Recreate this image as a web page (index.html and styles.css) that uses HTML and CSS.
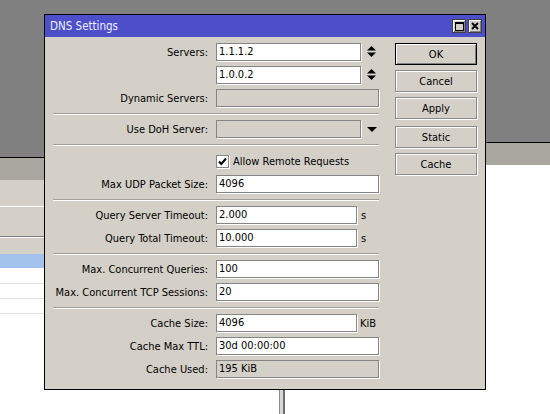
FILE: index.html
```
<!DOCTYPE html>
<html>
<head>
<meta charset="utf-8">
<link rel="stylesheet" href="styles.css">
</head>
<body>
<div class="desktop">
  <div class="win win-left">
    <div class="win-head"></div>
    <div class="band band1"></div>
    <div class="band band2"></div>
    <div class="band band3"></div>
    <div class="list-row selected"></div>
    <div class="list-row"></div>
    <div class="list-row"></div>
    <div class="list-row"></div>
  </div>
  <div class="win win-right">
    <div class="splitter"></div>
    <div class="win-right-main">
      <div class="win-head"></div>
    </div>
  </div>

  <div class="dialog">
    <div class="titlebar">
      <span class="title">DNS Settings</span>
      <div class="tbtns">
        <div class="tbtn"><svg width="9" height="9" viewBox="0 0 9 9"><rect x="0.5" y="0.5" width="8" height="8" fill="none" stroke="#000"/><rect x="0" y="0" width="9" height="2" fill="#000"/></svg></div>
        <div class="tbtn"><svg width="8" height="8" viewBox="0 0 8 8"><path d="M1 1L7 7M7 1L1 7" stroke="#000" stroke-width="1.9" fill="none"/></svg></div>
      </div>
    </div>
    <div class="body">
      <div class="form">
        <div class="row"><span class="lbl">Servers:</span><div class="field w145">1.1.1.2</div><svg class="spin" width="9" height="12" viewBox="0 0 9 12"><polygon points="4.5,0 9,4.5 0,4.5" fill="#000"/><polygon points="0,6.5 9,6.5 4.5,11" fill="#000"/></svg></div>
        <div class="row"><span class="lbl"></span><div class="field w145">1.0.0.2</div><svg class="spin" width="9" height="12" viewBox="0 0 9 12"><polygon points="4.5,0 9,4.5 0,4.5" fill="#000"/><polygon points="0,6.5 9,6.5 4.5,11" fill="#000"/></svg></div>
        <div class="row"><span class="lbl">Dynamic Servers:</span><div class="field disabled"></div></div>
        <div class="sep"></div>
        <div class="row"><span class="lbl">Use DoH Server:</span><div class="field disabled w145"></div><svg class="drop" width="10" height="5" viewBox="0 0 10 5"><polygon points="0,0 10,0 5,5" fill="#000"/></svg></div>
        <div class="sep"></div>
        <div class="row check-row"><span class="lbl"></span><span class="checkbox"><svg width="11" height="11" viewBox="0 0 11 11"><path d="M2 5.5L4.3 8L9 2.5" stroke="#000" stroke-width="2" fill="none"/></svg></span><span class="check-text">Allow Remote Requests</span></div>
        <div class="row"><span class="lbl">Max UDP Packet Size:</span><div class="field">4096</div></div>
        <div class="sep"></div>
        <div class="row"><span class="lbl">Query Server Timeout:</span><div class="field w141">2.000</div><span class="unit">s</span></div>
        <div class="row"><span class="lbl">Query Total Timeout:</span><div class="field w141">10.000</div><span class="unit">s</span></div>
        <div class="sep"></div>
        <div class="row"><span class="lbl">Max. Concurrent Queries:</span><div class="field">100</div></div>
        <div class="row"><span class="lbl">Max. Concurrent TCP Sessions:</span><div class="field">20</div></div>
        <div class="sep"></div>
        <div class="row"><span class="lbl">Cache Size:</span><div class="field w141">4096</div><span class="unit kib">KiB</span></div>
        <div class="row"><span class="lbl">Cache Max TTL:</span><div class="field">30d 00:00:00</div></div>
        <div class="row"><span class="lbl">Cache Used:</span><div class="field disabled">195 KiB</div></div>
      </div>
      <div class="buttons">
        <div class="btn default">OK</div>
        <div class="btn">Cancel</div>
        <div class="btn">Apply</div>
        <div class="btn gap">Static</div>
        <div class="btn">Cache</div>
      </div>
    </div>
  </div>
</div>
</body>
</html>
```
FILE: styles.css
```
* { box-sizing: border-box; }
html, body { margin: 0; padding: 0; }
body {
  font-family: "DejaVu Sans Condensed", "Liberation Sans", sans-serif;
  font-size: 11px;
  color: #000;
}
.desktop {
  position: relative;
  width: 550px;
  height: 414px;
  overflow: hidden;
  background: #808080;
}
.win { position: absolute; background: #fff; }
.win-left {
  left: 0; top: 157px; width: 280px; bottom: 0;
  border-top: 1px solid #000;
}
.win-head { height: 22px; background: #a9a69f; }
.band { background: #d4d0c8; }
.band1 { height: 27px; border-bottom: 1px solid #fff; }
.band2 { height: 30px; border-bottom: 1px solid #7e7e7e; }
.band3 { height: 17px; border-top: 1px solid #fff; }
.list-row { height: 15px; border-bottom: 1px solid #e2e2e2; }
.list-row.selected { background: #a3c2ec; border-bottom: 1px solid #fff; }

.win-right {
  left: 279px; top: 142px; right: 0; bottom: 0;
  display: flex;
}
.splitter {
  width: 6px;
  background: #d6d6d6;
  border-left: 1px solid #8a8a8a;
  border-right: 2px solid #6e6e6e;
}
.win-right-main {
  flex: 1;
  border-top: 1px solid #000;
}

.dialog {
  position: absolute;
  left: 44px; top: 14px;
  width: 442px; height: 376px;
  border: 1px solid #000;
  background: #d4d0c8;
  display: flex;
  flex-direction: column;
}
.titlebar {
  height: 22px;
  background: #4d4fc9;
  display: flex;
  align-items: center;
  padding: 0 3px 0 5px;
}
.title { color: #eeeeff; font-size: 11.5px; }
.tbtns { margin-left: auto; display: flex; gap: 2px; }
.tbtn {
  width: 14px; height: 14px;
  background: #d4d0c8;
  border: 1px solid #404040;
  box-shadow: inset 1px 1px 0 #fff, inset -1px -1px 0 #808080;
  display: flex; align-items: center; justify-content: center;
}
.tbtn svg { display: block; }

.body {
  display: flex;
  padding: 6px 8px 0 8px;
}
.form {
  width: 326px;
  display: flex;
  flex-direction: column;
  gap: 5px;
}
.row {
  height: 18px;
  display: flex;
  align-items: center;
}
.lbl {
  width: 163px;
  flex: none;
  text-align: right;
  padding-right: 8px;
  white-space: nowrap;
}
.field {
  width: 163px;
  height: 18px;
  flex: none;
  background: #fff;
  border: 1px solid #858585;
  box-shadow: 1px 1px 0 #fff;
  padding: 0 2px;
  line-height: 16px;
  white-space: nowrap;
  overflow: hidden;
}
.field.disabled { background: #d4d0c8; }
.field.w145 { width: 145px; }
.field.w141 { width: 141px; }
.spin { margin-left: 6px; display: block; }
.drop { margin-left: 6px; display: block; }
.unit { margin-left: 4px; }
.unit.kib { margin-left: 3px; }
.sep {
  height: 2px;
  margin-top: 1px;
  border-top: 1px solid #a19e98;
  border-bottom: 1px solid #fff;
}
.check-row { margin-top: 1px; }
.checkbox {
  width: 13px; height: 13px;
  flex: none;
  background: #fff;
  border: 1px solid #858585;
  box-shadow: 1px 1px 0 #fff;
  display: flex; align-items: center; justify-content: center;
}
.checkbox svg { display: block; }
.check-text { margin-left: 4px; }

.buttons {
  margin-left: 16px;
  width: 82px;
  display: flex;
  flex-direction: column;
  gap: 5px;
}
.btn {
  height: 22px;
  border: 1px solid #8a8a8a;
  box-shadow: 1px 1px 0 #fff, inset 1px 1px 0 #fff;
  display: flex; align-items: center; justify-content: center;
}
.btn.default {
  border: 1px solid #000;
  box-shadow: inset 1px 1px 0 #fff, inset -1px -1px 0 #808080;
}
.btn.gap { margin-top: 2px; }
```
